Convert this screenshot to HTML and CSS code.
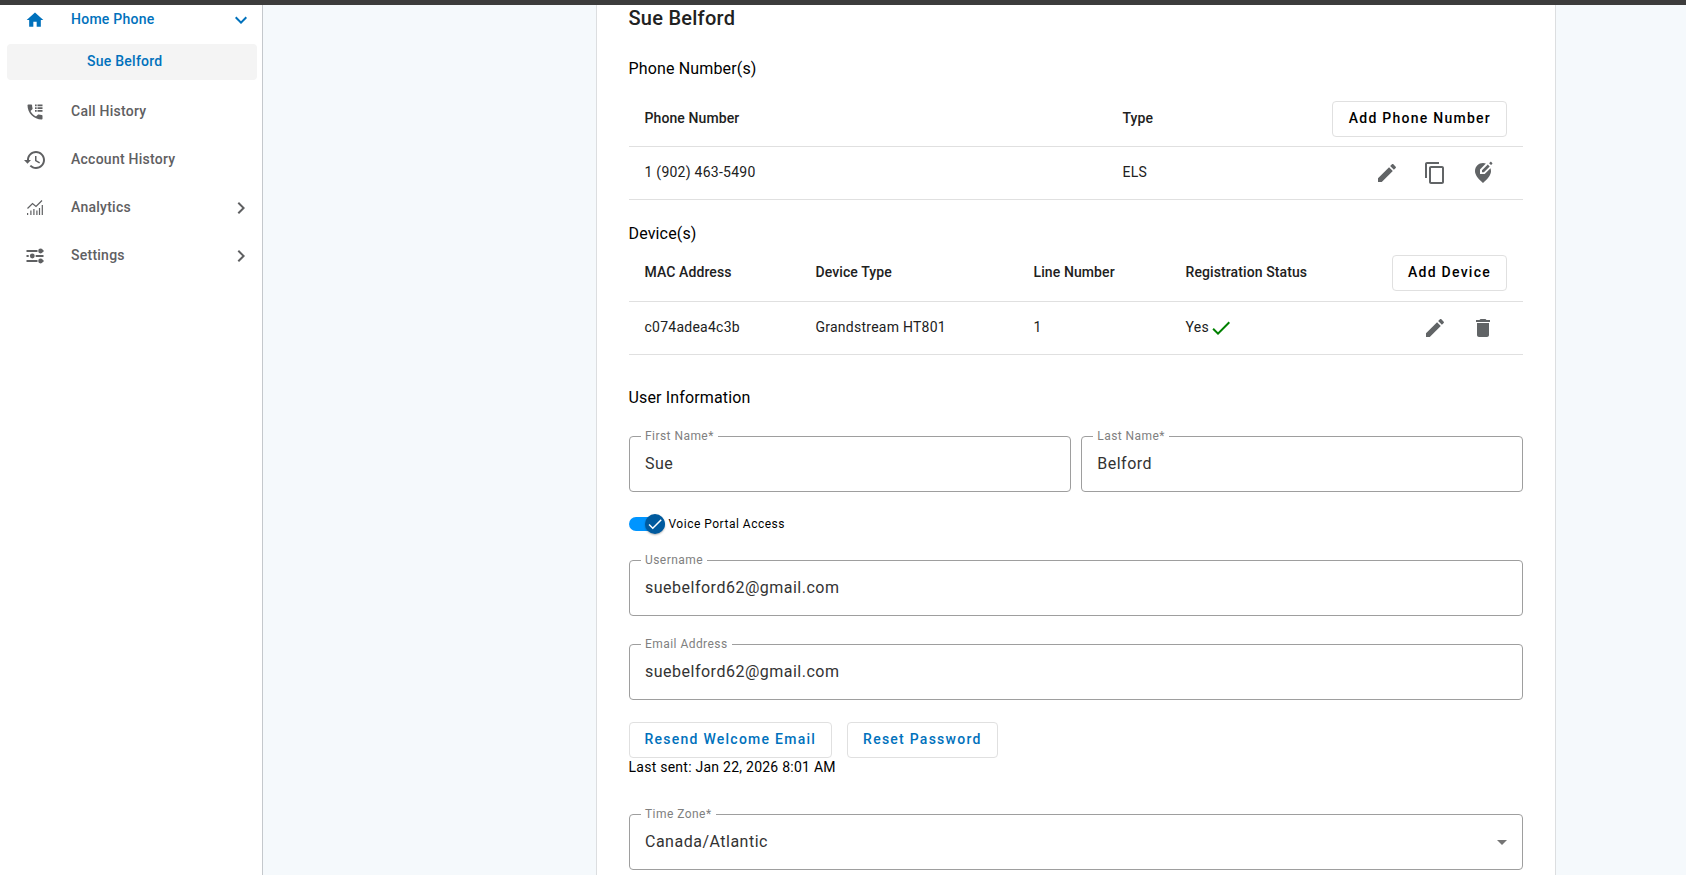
FILE: index.html
```
<!DOCTYPE html>
<html lang="en">
<head>
    <meta charset="UTF-8">
    <meta name="viewport" content="width=device-width, initial-scale=1.0">
    <title>Home Phone - Sue Belford</title>
    <link rel="stylesheet" href="styles.css">
</head>
<body>
    <div class="topbar"></div>
    <div class="layout">
        <nav class="sidebar">
            <a class="nav-item active">
                <svg class="nav-icon" height="20" viewBox="0 0 24 24"><path d="M10 20v-6h4v6h5v-8h3L12 3 2 12h3v8z"/></svg>
                <span>Home Phone</span>
                <svg class="chevron" viewBox="0 0 24 24"><path d="M16.59 8.59L12 13.17 7.41 8.59 6 10l6 6 6-6z"/></svg>
            </a>
            <a class="nav-sub">Sue Belford</a>
            <a class="nav-item">
                <svg class="nav-icon" height="20" viewBox="0 0 24 24"><path d="M20 15.5c-1.25 0-2.45-.2-3.57-.57-.35-.11-.74-.03-1.02.24l-2.2 2.2c-2.83-1.44-5.15-3.75-6.59-6.58l2.2-2.21c.28-.27.36-.66.25-1.01C8.7 6.45 8.5 5.25 8.5 4c0-.55-.45-1-1-1H4c-.55 0-1 .45-1 1 0 9.39 7.61 17 17 17 .55 0 1-.45 1-1v-3.5c0-.55-.45-1-1-1zM12 3h2v2h-2zM15 3h6v2h-6zM12 6.3h2v2h-2zM15 6.3h6v2h-6zM12 9.6h2v2h-2zM15 9.6h6v2h-6z"/></svg>
                <span>Call History</span>
            </a>
            <a class="nav-item">
                <svg class="nav-icon" height="24" viewBox="0 0 24 24"><path d="M13 3c-4.97 0-9 4.03-9 9H1l3.5 3.7L8 12H6c0-3.87 3.13-7 7-7s7 3.13 7 7-3.13 7-7 7c-1.93 0-3.68-.79-4.94-2.06l-1.42 1.42C8.27 19.99 10.51 21 13 21c4.97 0 9-4.03 9-9s-4.03-9-9-9zm-1 5v5l4.28 2.54.72-1.21-3.5-2.08V8H12z"/></svg>
                <span>Account History</span>
            </a>
            <a class="nav-item">
                <svg class="nav-icon" height="18" viewBox="0 0 18 18"><path d="M1.5 9.5l5-5 3.5 3 6-6" fill="none" stroke="#5f6062" stroke-width="1.2"/><path d="M1 14h1.2v2H1zM4.3 11.5h1.2V16H4.3zM7.3 10h1.2v6H7.3zM10.3 11.5h1.2V16h-1.2zM12.9 9h1.2v7h-1.2zM15.7 6h1.2v10h-1.2z"/></svg>
                <span>Analytics</span>
                <svg class="chevron" viewBox="0 0 24 24"><path d="M10 6L8.59 7.41 13.17 12l-4.58 4.59L10 18l6-6z"/></svg>
            </a>
            <a class="nav-item">
                <svg class="nav-icon" height="18" viewBox="0 0 18 18"><path d="M.5 3.1h11v1.8H.5zM15.5 3.1h2v1.8h-2zM.5 8.1h2.2v1.8H.5zM9.7 8.1h7.8v1.8H9.7zM.5 13.1h11v1.8H.5zM15.5 13.1h2v1.8h-2z"/><circle cx="14.6" cy="4" r="2.4"/><circle cx="6.3" cy="9" r="2.4"/><circle cx="14.6" cy="14" r="2.4"/></svg>
                <span>Settings</span>
                <svg class="chevron" viewBox="0 0 24 24"><path d="M10 6L8.59 7.41 13.17 12l-4.58 4.59L10 18l6-6z"/></svg>
            </a>
        </nav>

        <main class="card">
            <h1>Sue Belford</h1>

            <h2 class="numbers-title">Phone Number(s)</h2>
            <div class="table numbers">
                <div class="row head">
                    <div>Phone Number</div>
                    <div>Type</div>
                    <div class="actions"><button class="btn">Add Phone Number</button></div>
                </div>
                <div class="row">
                    <div>1 (902) 463-5490</div>
                    <div>ELS</div>
                    <div class="actions">
                        <span class="icon-btn"><svg viewBox="0 0 24 24"><path d="M3 17.25V21h3.75L17.81 9.94l-3.75-3.75L3 17.25zM20.71 7.04c.39-.39.39-1.02 0-1.41l-2.34-2.34c-.39-.39-1.02-.39-1.41 0l-1.83 1.83 3.75 3.75 1.83-1.83z"/></svg></span>
                        <span class="icon-btn"><svg viewBox="0 0 24 24"><path d="M16 1H4c-1.1 0-2 .9-2 2v14h2V3h12V1zm3 4H8c-1.1 0-2 .9-2 2v14c0 1.1.9 2 2 2h11c1.1 0 2-.9 2-2V7c0-1.1-.9-2-2-2zm0 16H8V7h11v14z"/></svg></span>
                        <span class="icon-btn"><svg viewBox="0 0 24 24"><path d="M14.9 2.5C14 2.2 13 2 12 2c-4.2 0-8 3.22-8 8.2 0 3.3 2.7 7.2 8 11.8 5.3-4.6 8-8.5 8-11.8 0-1.1-.2-2.1-.5-3L13.7 13H9V8.4l5.9-5.9z"/><path d="M11 11.2V9.3l5.8-5.8 1.9 1.9-5.8 5.8H11zM21.2 2.9l-1.2 1.2-1.9-1.9L19.3 1c.3-.3.7-.3 1 0l.9.9c.3.3.3.7 0 1z"/></svg></span>
                    </div>
                </div>
            </div>

            <h2 class="devices-title">Device(s)</h2>
            <div class="table devices">
                <div class="row head">
                    <div>MAC Address</div>
                    <div>Device Type</div>
                    <div>Line Number</div>
                    <div>Registration Status</div>
                    <div class="actions"><button class="btn">Add Device</button></div>
                </div>
                <div class="row">
                    <div>c074adea4c3b</div>
                    <div>Grandstream HT801</div>
                    <div>1</div>
                    <div class="status">Yes<svg viewBox="0 0 24 24"><path d="M9 16.17L4.83 12l-1.42 1.41L9 19 21 7l-1.41-1.41z"/></svg></div>
                    <div class="actions">
                        <span class="icon-btn"><svg viewBox="0 0 24 24"><path d="M3 17.25V21h3.75L17.81 9.94l-3.75-3.75L3 17.25zM20.71 7.04c.39-.39.39-1.02 0-1.41l-2.34-2.34c-.39-.39-1.02-.39-1.41 0l-1.83 1.83 3.75 3.75 1.83-1.83z"/></svg></span>
                        <span class="icon-btn"><svg viewBox="0 0 24 24"><path d="M6 19c0 1.1.9 2 2 2h8c1.1 0 2-.9 2-2V7H6v12zM19 4h-3.5l-1-1h-5l-1 1H5v2h14V4z"/></svg></span>
                    </div>
                </div>
            </div>

            <h2 class="info-title">User Information</h2>
            <div class="field-row">
                <div class="field"><label>First Name*</label><span>Sue</span></div>
                <div class="field"><label>Last Name*</label><span>Belford</span></div>
            </div>
            <div class="toggle">
                <div class="track">
                    <div class="thumb"><svg viewBox="0 0 24 24"><path d="M9 16.17L4.83 12l-1.42 1.41L9 19 21 7l-1.41-1.41z"/></svg></div>
                </div>
                <span>Voice Portal Access</span>
            </div>
            <div class="field username"><label>Username</label><span>suebelford62@gmail.com</span></div>
            <div class="field email"><label>Email Address</label><span>suebelford62@gmail.com</span></div>
            <div class="buttons">
                <button class="btn primary">Resend Welcome Email</button>
                <button class="btn primary">Reset Password</button>
            </div>
            <p class="last-sent">Last sent: Jan 22, 2026 8:01 AM</p>
            <div class="field timezone"><label>Time Zone*</label><span>Canada/Atlantic</span><i class="arrow"></i></div>
        </main>
    </div>
</body>
</html>
```
FILE: styles.css
```
* {
    box-sizing: border-box;
}
body {
    margin: 0;
    height: 100vh;
    overflow: hidden;
    background-color: #f5f9fc;
    font-family: Roboto, sans-serif;
    font-size: 14px;
    color: #000;
}
.topbar {
    height: 5px;
    background-color: #3c3c3c;
}
.layout {
    display: flex;
    height: 870px;
}
.sidebar {
    width: 263px;
    background-color: #fff;
    border-right: 1px solid #c4c8cc;
    overflow: hidden;
}
.nav-item {
    display: flex;
    align-items: center;
    height: 48px;
    padding-right: 9px;
    font-weight: 500;
    letter-spacing: 0.25px;
    color: #5f6062;
    fill: #5f6062;
}
.nav-item span {
    flex: 1;
    margin-top: -2px;
}
.nav-item.active {
    height: 30px;
    color: #0071bc;
    fill: #0071bc;
}
.nav-icon {
    flex: none;
    width: 70px;
    margin-right: 1px;
}
.chevron {
    width: 24px;
    height: 24px;
}
.nav-sub {
    display: flex;
    align-items: center;
    height: 36px;
    margin: 9px 5px 8px 7px;
    padding: 0 0 2px 80px;
    border-radius: 4px;
    background-color: #f4f4f4;
    color: #0071bc;
    font-weight: 500;
    letter-spacing: 0.25px;
}
.card {
    width: 960px;
    height: 870px;
    margin-left: 333px;
    padding: 0 32px 0 31.5px;
    background-color: #fff;
    border: 1px solid #dcdee0;
    border-top: none;
    border-bottom: none;
    overflow: hidden;
}
h1 {
    margin: 0;
    font-size: 20px;
    font-weight: 500;
    line-height: 26px;
    letter-spacing: 0.25px;
    color: #212121;
}
h2 {
    margin: 0;
    font-size: 16px;
    font-weight: 400;
    line-height: 24px;
    letter-spacing: 0.15px;
}
.numbers-title {
    margin-top: 26px;
}
.numbers {
    margin-top: 10px;
}
.devices-title {
    margin-top: 22px;
}
.devices {
    margin-top: -1px;
}
.row {
    display: grid;
    align-items: center;
    height: 53px;
    padding: 0 16px;
    border-bottom: 1px solid #e0e0e0;
    letter-spacing: 0.25px;
    color: #212121;
}
.row > div {
    padding-bottom: 2px;
}
.row.head {
    height: 56px;
    font-weight: 500;
    letter-spacing: 0.1px;
}
.devices .head {
    height: 57px;
}
.numbers .row {
    grid-template-columns: 478px 1fr auto;
}
.devices .row {
    grid-template-columns: 171px 218px 152px 1fr auto;
}
.row > .actions {
    display: flex;
    padding-bottom: 0;
}
.icon-btn {
    display: flex;
    justify-content: center;
    width: 48px;
    padding-right: 1px;
}
.icon-btn svg {
    width: 24px;
    height: 24px;
    fill: #616466;
}
.status {
    display: flex;
    align-items: center;
}
.status svg {
    width: 24px;
    height: 24px;
    margin-bottom: -2px;
    fill: green;
}
.btn {
    height: 36px;
    padding: 0 15px 2px;
    border: 1px solid #e0e0e0;
    border-radius: 4px;
    background-color: #fff;
    color: #000;
    font-family: inherit;
    font-size: 14px;
    font-weight: 500;
    letter-spacing: 1.25px;
}
.numbers .btn {
    padding-left: 15.5px;
}
.btn.primary {
    color: #0071bc;
}
.info-title {
    margin-top: 31px;
}
.field-row {
    display: flex;
    gap: 10px;
    margin-top: 26px;
}
.field {
    position: relative;
    display: flex;
    flex: 1;
    align-items: center;
    justify-content: space-between;
    height: 56px;
    padding: 0 15px 2px 15.5px;
    border: 1px solid #9e9e9e;
    border-radius: 4px;
    font-size: 16px;
    letter-spacing: 0.5px;
    color: #333;
}
/* label sits over the top border */
.field label {
    position: absolute;
    top: -9px;
    left: 11.5px;
    padding: 0 4px;
    background-color: #fff;
    font-size: 12px;
    line-height: 16px;
    letter-spacing: 0.45px;
    color: #808080;
}
.toggle {
    display: flex;
    align-items: center;
    height: 20px;
    margin-top: 22px;
    font-size: 12px;
    letter-spacing: 0.5px;
}
.track {
    display: flex;
    align-items: center;
    justify-content: flex-end;
    width: 36px;
    height: 14px;
    margin-right: 4px;
    border-radius: 7px;
    background-color: #0095ff;
}
.thumb {
    display: flex;
    align-items: center;
    justify-content: center;
    width: 20px;
    height: 20px;
    border-radius: 50%;
    background-color: #005a9e;
    box-shadow: 0 1px 2px rgba(0, 0, 0, 0.3);
}
.thumb svg {
    width: 18px;
    height: 18px;
    fill: #fff;
}
.username {
    margin-top: 26px;
}
.email {
    margin-top: 28px;
}
.buttons {
    display: flex;
    gap: 15px;
    margin-top: 22px;
}
.last-sent {
    margin: 0;
    line-height: 19px;
    letter-spacing: 0.25px;
}
.timezone {
    margin-top: 37px;
}
.arrow {
    margin-top: 2px;
    border: 5px solid transparent;
    border-top-color: #757575;
    border-bottom: none;
}
```
